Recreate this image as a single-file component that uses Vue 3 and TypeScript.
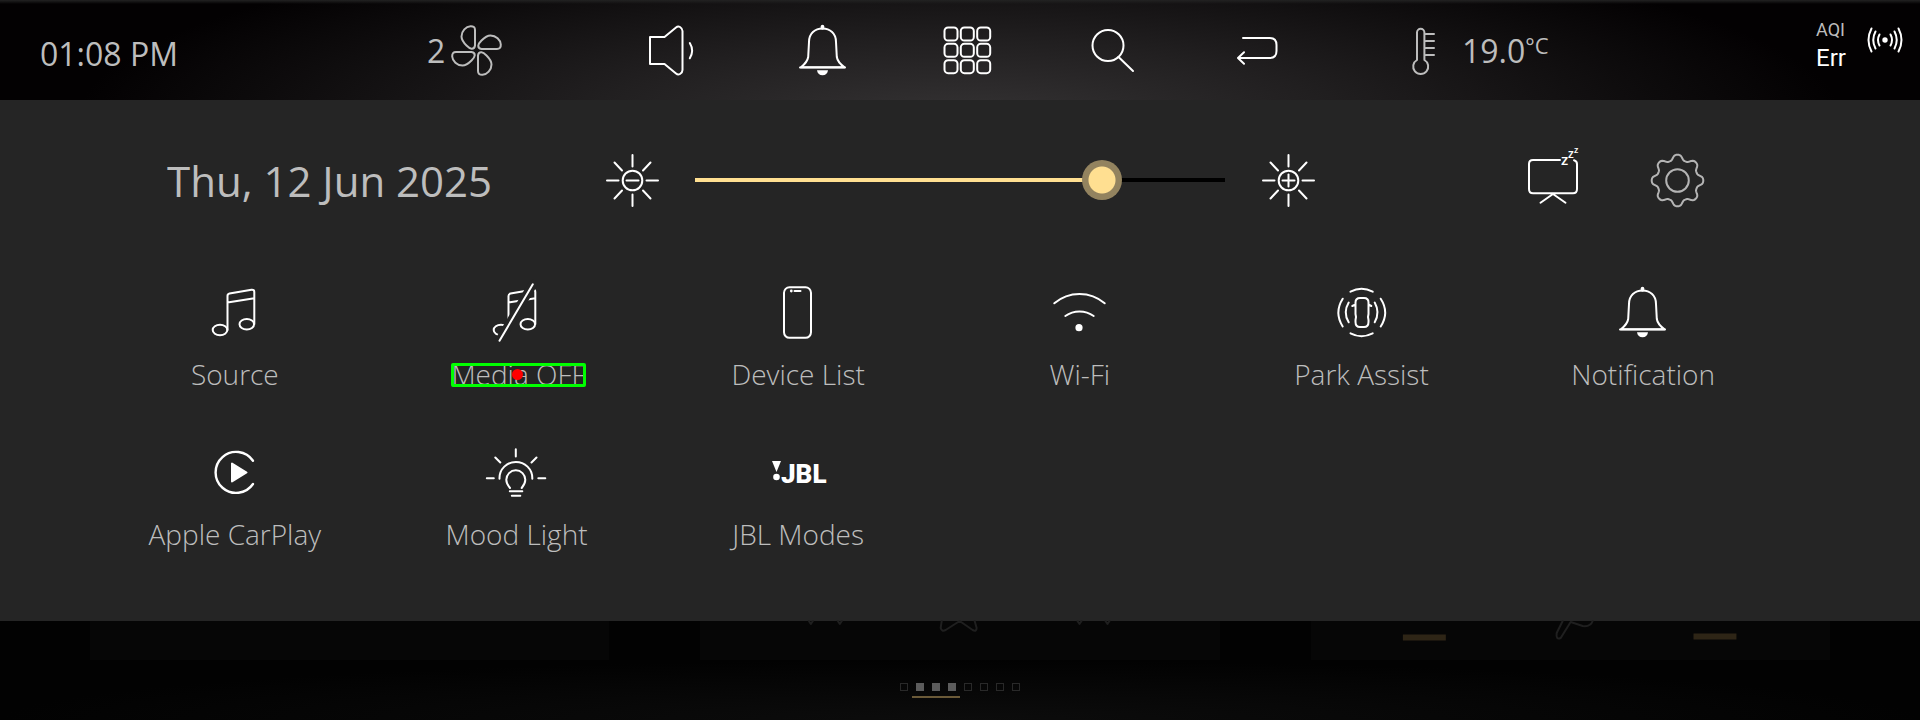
<script setup lang="ts">
import { computed, ref } from 'vue'

interface IconButton {
  label: string
  icon: string
}

const bell =
  '<path d="M9 47.3H52.5C48 44 45.5 41.500 44.800 37L44 22C44 13.500 38 8.500 30.500 8.500S17 13.500 17 22L16.200 37C15.500 41.500 13 44 9 47.300Z"/><path d="M8 47.600H53" stroke-width="2"/><path d="M30.500 6.500V8" stroke-width="3.600"/><path d="M25 50.200H36C35.500 53.500 33.500 55.200 30.500 55.200S25.500 53.500 25 50.200Z" fill="currentColor" stroke="none"/>'

const gridCells = [7.5, 23.8, 40.2]
  .flatMap((y) => [7.5, 23.8, 40.2].map((x) => `<rect x="${x}" y="${y}" width="13" height="13" rx="3.6"/>`))
  .join('')

const note =
  '<path d="M23.500 48V14Q23.500 12 25.500 11.600L47.500 7.700Q50.300 7.400 50.300 10V42M23.500 20.500L50.300 16.300"/><ellipse cx="16" cy="48" rx="7.300" ry="5.300"/><ellipse cx="42.800" cy="42.300" rx="7.300" ry="5.300"/>'

const shortcuts: IconButton[] = [
  {
    label: 'Volume',
    icon: '<path d="M3 17H17.500L29 7.500Q31 5.800 33 7Q35.500 8.500 35.500 11V50Q35.500 52.500 33 54Q31 55.200 29 53.500L17.500 44H3Z"/><path d="M42.800 23Q47.400 30.500 42.800 38.300"/>',
  },
  { label: 'Notifications', icon: bell },
  { label: 'Apps', icon: gridCells },
  { label: 'Search', icon: '<circle cx="26" cy="25.500" r="15.500"/><path d="M36.500 37L51 51"/>' },
  { label: 'Back', icon: '<path d="M16 18H42.500Q49.500 18 49.500 25V31Q49.500 38 42.500 38H11.500M17 32.300L11 38L17 43.700"/>' },
]

const tiles: IconButton[] = [
  { label: 'Source', icon: note },
  {
    label: 'Media OFF',
    icon: `${note}<path d="M47.800 2.300L14.500 58.700" stroke="#252525" stroke-width="9"/><path d="M47.800 2.300L14.500 58.700"/>`,
  },
  {
    label: 'Device List',
    icon: '<rect x="17" y="5.300" width="27" height="50.500" rx="5.500"/><path d="M27.500 9H33.500" stroke-width="2"/><circle cx="24.300" cy="9" r="1.400" fill="currentColor" stroke="none"/>',
  },
  {
    label: 'Wi-Fi',
    icon: '<path d="M5.300 21.300A38.700 38.700 0 0 1 55.700 21.300M16.300 34A24.200 24.200 0 0 1 44.700 34"/><circle cx="30" cy="45.700" r="3.600" fill="currentColor" stroke="none"/>',
  },
  {
    label: 'Park Assist',
    icon: '<path d="M30 16H34Q38.500 16 38.500 20.500V32L38 35L38.500 38V40Q38.500 45 34 45H30Q25.500 45 25.500 40V38L26 35L25.500 32V20.500Q25.500 16 30 16ZM25.500 22.500L22.300 24M38.500 22.500L41.300 24M12.700 16.700Q4 30.500 12.700 44.500M18.700 20.500Q12.700 30.500 18.700 40.300M44.700 20.500Q50.300 30.500 44.700 40.300M50.700 16.700Q59.700 30.500 50.700 44.500M20.500 9.700Q31.500 4 42.700 9.700M20.500 51.300Q31.500 57 42.700 51.300"/>',
  },
  { label: 'Notification', icon: bell },
  {
    label: 'Apple CarPlay',
    icon: '<path d="M49 18.800A20.500 20.500 0 1 0 49 42" stroke-width="2.400"/><path d="M28 21.500V39.500L42.500 30.500Z" fill="currentColor"/>',
  },
  {
    label: 'Mood Light',
    icon: '<path d="M25 46C22.500 43 21.300 41 21.300 37.800A9.500 9.500 0 0 1 40.300 37.800C40.300 41 39.200 43 36.700 46M14.500 36.700V36A16.300 16 0 0 1 47.300 36V36.700M30.800 7.300V14.500M10.300 15.500L15.300 20.500M51.500 15.500L46.500 20.500M1.800 36.300H8.800M53.300 36.300H60.300M24.800 49.300H37.300M26.800 53.700H35.300"/>',
  },
  {
    label: 'JBL Modes',
    icon: '<path d="M5 19H14L9.500 30Z" fill="currentColor" stroke="none"/><circle cx="9.500" cy="35" r="3.300" fill="currentColor" stroke="none"/><text x="14" y="41" font-size="26" font-weight="900" font-family="Roboto, sans-serif" fill="currentColor" stroke="none">JBL</text>',
  },
]

const sunRays =
  '<circle cx="30.500" cy="30.500" r="9.800"/><path d="M30.500 5V16.500M30.500 44.500V56M5 30.500H16.500M44.500 30.500H56M12.500 12.500L20 20.500M48.500 12.500L41 20.500M12.500 48.500L20 40.500M48.500 48.500L41 40.500M24.500 30.500H36.500"/>'

const gearPath = computed(() => {
  const points: string[] = []
  for (let i = 0; i < 144; i++) {
    const angle = (i / 144) * Math.PI * 2
    const wave = Math.cos(angle * 8)
    const radius = 23.2 + 2.9 * Math.tanh(wave * 1.4)
    points.push(`${(29.5 + radius * Math.cos(angle)).toFixed(1)} ${(30.5 + radius * Math.sin(angle)).toFixed(1)}`)
  }
  return `M${points.join('L')}Z`
})

const brightness = ref(79)
const pages = [false, true, true, true, false, false, false, false]
</script>

<template>
  <div class="screen">
    <header class="topbar">
      <time class="clock">01:08 PM</time>
      <button class="fan" type="button" aria-label="Fan speed 2">
        <span>2</span>
        <svg class="icon" viewBox="0 0 60 60">
          <path
            v-for="turn in [0, 90, 180, 270]"
            :key="turn"
            :transform="`rotate(${turn} 30.5 30.5)`"
            d="M29 10V25.500Q28.500 29 25.500 28.700Q23.500 28.500 20.500 25.500C17 22 15.500 19.500 15.500 16.500C15.500 11 20 6.500 24.500 6.200Q29 6 29 10Z"
          />
        </svg>
      </button>
      <nav class="shortcuts" aria-label="Shortcuts">
        <button v-for="item in shortcuts" :key="item.label" type="button" :aria-label="item.label">
          <svg class="icon" viewBox="0 0 60 60" v-html="item.icon"></svg>
        </button>
      </nav>
      <div class="temperature">
        <svg class="thermometer" viewBox="0 0 30 60">
          <path d="M9 40V12.500A3.700 3.700 0 0 1 16.400 12.500V40A7.500 7.500 0 1 1 9 40ZM18 14H26M18 21H26M18 28H26M18 35H26" />
        </svg>
        <span class="degrees">19.0</span><span class="unit">°C</span>
      </div>
      <div class="status">
        <div class="aqi"><span>AQI</span><strong>Err</strong></div>
        <svg class="signal" viewBox="0 0 40 40">
          <circle cx="19" cy="20" r="2.700" />
          <path d="M13.500 14.500Q10.500 20 13.500 25.500M9.500 11.500Q5 20 9.500 28.500M5.500 8.500Q-.5 20 5.500 31.500M24.500 14.500Q27.500 20 24.500 25.500M28.500 11.500Q33 20 28.500 28.500M32.500 8.500Q38.500 20 32.500 31.500" />
        </svg>
      </div>
    </header>

    <main class="panel">
      <div class="controls">
        <time class="date" datetime="2025-06-12">Thu, 12 Jun 2025</time>
        <div class="brightness">
          <svg class="icon" viewBox="0 0 60 60" v-html="sunRays"></svg>
          <input
            v-model.number="brightness"
            type="range"
            min="0"
            max="100"
            aria-label="Brightness"
            :style="{ '--level': brightness / 100 }"
          />
          <svg class="icon" viewBox="0 0 60 60" v-html="sunRays + '<path d=&quot;M30.500 24.500V36.500&quot;/>'"></svg>
        </div>
        <div class="actions">
          <button type="button" aria-label="Screen sleep">
            <svg class="icon" viewBox="0 0 60 60">
              <path d="M37 10H10Q6 10 6 14V39Q6 43.300 10 43.300H50Q54 43.300 54 39V14Q54 11 51 10.200M17.500 52.700L30 44L42.500 52.700" />
              <g class="snooze">
                <text x="38" y="15" font-size="15">z</text>
                <text x="45" y="8" font-size="12">z</text>
                <text x="51" y="3" font-size="9">z</text>
              </g>
            </svg>
          </button>
          <button class="settings" type="button" aria-label="Settings">
            <svg class="icon" viewBox="0 0 60 60">
              <path :d="gearPath" />
              <circle cx="29.500" cy="30.500" r="11.300" />
            </svg>
          </button>
        </div>
      </div>

      <div class="tiles">
        <button v-for="tile in tiles" :key="tile.label" class="tile" type="button">
          <svg class="icon" viewBox="0 0 60 60" v-html="tile.icon"></svg>
          <span class="label" :class="{ marked: tile.label === 'Media OFF' }">{{ tile.label }}</span>
        </button>
      </div>
    </main>

    <footer class="home">
      <div class="cards">
        <div class="card"></div>
        <div class="card">
          <svg class="card-art" viewBox="0 0 520 39">
            <path d="M109 0L111 3L113 0M138 0L140 3L142 0M242 0L241 7Q242 11 246 9L260 0L273 9Q277 11 277 7L275 0M378 0L380 3L382 0M406 0L408 3L410 0" />
          </svg>
        </div>
        <div class="card">
          <svg class="card-art" viewBox="0 0 520 39">
            <path d="M252 0L246 12Q245 19 250 17L260 1L272 5Q280 6 282 0" />
            <path class="amber" d="M92 16.500H135M383 15.500H426" />
          </svg>
        </div>
      </div>
      <div class="pager">
        <i v-for="(active, index) in pages" :key="index" :class="{ active }"></i>
      </div>
      <div class="underline"></div>
    </footer>
  </div>
</template>

<style>
body {
  margin: 0;
  background: #020202;
}
</style>

<style scoped>
.screen {
  min-height: 100vh;
  display: flex;
  flex-direction: column;
  background: #020202;
  color: #bdbdbd;
  font-family: 'Open Sans', 'Noto Sans', sans-serif;
}

button {
  padding: 0;
  border: 0;
  background: none;
  color: #fff;
  font: inherit;
  cursor: pointer;
}

svg {
  display: block;
  flex: none;
  overflow: visible;
  fill: none;
  stroke: currentColor;
  stroke-width: 2;
  stroke-linecap: round;
  stroke-linejoin: round;
}

.icon {
  width: 60px;
  height: 60px;
}

.topbar {
  display: grid;
  grid-template-columns: 387fr 220fr 640fr 121fr 408fr 104fr;
  align-items: center;
  height: 100px;
  padding-left: 40px;
  background:
    linear-gradient(#222, transparent 4px),
    radial-gradient(ellipse 46% 190px at 50% 120px, #353334, #211f20 42%, #0e0c0d 78%, #030102);
  font-size: 32px;
  line-height: 44px;
}

.clock {
  padding-top: 8px;
}

.fan {
  display: flex;
  align-items: center;
  gap: 1px;
  color: #bdbdbd;
}

.fan span,
.degrees {
  padding-top: 2px;
}

.shortcuts {
  display: flex;
  justify-content: space-between;
}

.temperature {
  grid-column: 5;
  display: flex;
  align-items: center;
}

.thermometer {
  width: 30px;
  height: 60px;
  margin-right: 24px;
}

.unit {
  align-self: flex-start;
  font-size: 22px;
  line-height: 50px;
}

.status {
  display: flex;
  align-items: flex-start;
  align-self: start;
  gap: 20px;
  padding-top: 20px;
}

.aqi {
  display: flex;
  flex-direction: column;
  width: 30px;
  font-family: Roboto, sans-serif;
  font-size: 18px;
  line-height: 20px;
}

.aqi strong {
  color: #fff;
  font-size: 24px;
  font-weight: 400;
  line-height: 36px;
}

.signal {
  width: 40px;
  height: 40px;
  color: #fff;
}

.signal circle {
  fill: currentColor;
  stroke: none;
}

.panel {
  box-sizing: border-box;
  min-height: 521px;
  padding-top: 50px;
  background: #252525;
}

.controls {
  display: flex;
  align-items: center;
  height: 60px;
  padding: 0 212px 0 167px;
}

.date {
  flex: none;
  width: 435px;
  padding-top: 2px;
  font-size: 42px;
  line-height: 60px;
}

.brightness {
  flex: 1;
  display: flex;
  align-items: center;
  gap: 33px;
  color: #fff;
}

.brightness input {
  --track: calc(20px + var(--level) * (100% - 40px));
  flex: 1;
  min-width: 0;
  height: 40px;
  margin: 0;
  appearance: none;
  background: linear-gradient(90deg, #ffdf91 var(--track), #000 var(--track)) center / 100% 4px no-repeat;
}

.brightness input::-webkit-slider-thumb {
  appearance: none;
  width: 40px;
  height: 40px;
  border-radius: 50%;
  background: radial-gradient(circle, #ffdf91 13px, #93835f 14px);
}

.actions {
  display: flex;
  gap: 65px;
  margin-left: 205px;
}

.settings {
  color: #b4b4b4;
}

.snooze {
  fill: currentColor;
  stroke: none;
  font-family: 'Open Sans', sans-serif;
  font-weight: 600;
}

.tiles {
  display: grid;
  grid-template-columns: repeat(6, 1fr);
  grid-auto-rows: 160px;
  padding: 72px 137px 0 93px;
}

.tile {
  display: flex;
  flex-direction: column;
  align-items: center;
  gap: 13px;
}

.label {
  padding-left: 2px;
  color: #bdbdbd;
  font-size: 28px;
  font-weight: 300;
  line-height: 38px;
  white-space: nowrap;
}

.marked {
  position: relative;
  padding-left: 6px;
}

.marked::before {
  content: '';
  position: absolute;
  inset: 8px 0 6px 6px;
  border: 3px solid #0f0;
  border-radius: 2px;
}

.marked::after {
  content: '';
  position: absolute;
  top: 14px;
  left: 50%;
  width: 11px;
  height: 11px;
  margin-left: -3px;
  border-radius: 50%;
  background: #f00;
}

.home {
  flex: 1;
  background: radial-gradient(ellipse 50% 60px at 50% 100%, #0c0c0c, #020202);
}

.cards {
  display: flex;
  gap: 91px;
  padding: 0 90px;
}

.card {
  flex: 1;
  height: 39px;
  background: #060606;
}

.card-art {
  width: 100%;
  height: 39px;
  color: #1f1f1f;
}

.amber {
  stroke: #2e2516;
  stroke-width: 6;
  stroke-linecap: butt;
}

.pager {
  display: flex;
  justify-content: center;
  gap: 8px;
  margin-top: 23px;
}

.pager i {
  box-sizing: border-box;
  width: 8px;
  height: 8px;
  border: 1px solid #292929;
}

.pager .active {
  border: 0;
  background: #5c5c5c;
}

.underline {
  width: 48px;
  height: 2px;
  margin-top: 5px;
  margin-left: calc(50% - 48px);
  background: #6b5a38;
}
</style>
